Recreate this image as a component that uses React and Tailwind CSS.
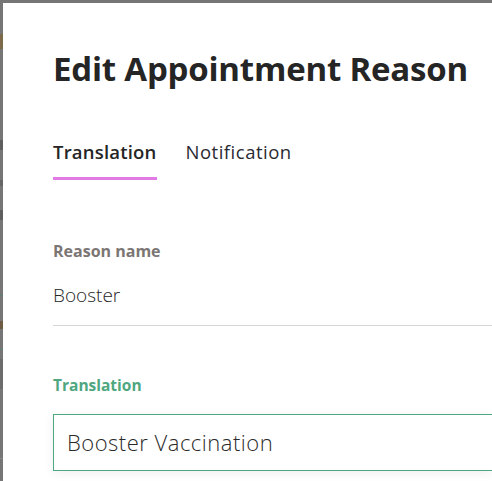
import React from 'react'

const font = { fontFamily: '"Open Sans", "Lato", sans-serif' }

const App = () => {
  return (
    <div className='w-[492px] h-[481px] overflow-hidden bg-[#767676] flex' style={font}>
      {/* dimmed page behind the drawer */}
      <div className='w-[3px] shrink-0 flex flex-col'>
        <div className='h-[34px]' />
        <div className='h-[15px] bg-[#7d6a4a]' />
        <div className='h-[91px]' />
        <div className='h-[10px] bg-[#5e5e5e]' />
        <div className='h-[30px]' />
        <div className='h-[6px] bg-[#666]' />
        <div className='h-[24px]' />
        <div className='h-[10px] bg-[#5e5e5e]' />
        <div className='h-[75px]' />
        <div className='h-px bg-[#5c8070]' />
        <div className='h-[25px]' />
        <div className='h-[8px] bg-[#6f5a44]' />
        <div className='h-[20px]' />
        <div className='h-px bg-[#5c8070]' />
        <div className='h-[9px]' />
        <div className='h-[30px] bg-[#6c6c6c]' />
        <div className='h-[69px]' />
        <div className='h-px bg-[#888]' />
      </div>

      <div className='flex-1 mt-[3px] bg-white pl-[50px] pt-[44px] min-w-0'>
        <h1 className='text-[33px] leading-[44px] font-bold text-[#252525] whitespace-nowrap tracking-[-0.2px]'>
          Edit Appointment Reason
        </h1>

        <div className='mt-[49px] flex gap-[29px] text-[18.5px] leading-[24px]'>
          <div className='flex flex-col'>
            <span className='font-semibold text-[#252525] tracking-[0.2px]'>Translation</span>
            <div className='mt-[13px] h-[3px] bg-[#e07ae4]' />
          </div>
          <span className='font-normal text-[#2a2a33] tracking-[0.5px]'>Notification</span>
        </div>

        <div className='mt-[61px]'>
          <p className='text-[16px] leading-[20px] font-bold text-[#7b7674]'>Reason name</p>
          <p className='mt-[22px] text-[19px] leading-[24px] font-light text-[#252525]'>Booster</p>
          <div className='mt-[18px] h-px bg-[#d6d6d6]' />
        </div>

        <div className='mt-[49px]'>
          <p className='text-[15.5px] leading-[20px] font-bold text-[#4fa77f]'>Translation</p>
          <div
            className='mt-[19px] h-[57px] border border-solid border-[#4fa77f] border-r-0 shadow-[0_2px_10px_rgba(0,0,0,0.07)] flex items-center pl-[13px]'
          >
            <span className='text-[22px] font-light text-[#2a2a2a] tracking-[0.5px]'>Booster Vaccination</span>
          </div>
        </div>
      </div>
    </div>
  )
}

export default App
